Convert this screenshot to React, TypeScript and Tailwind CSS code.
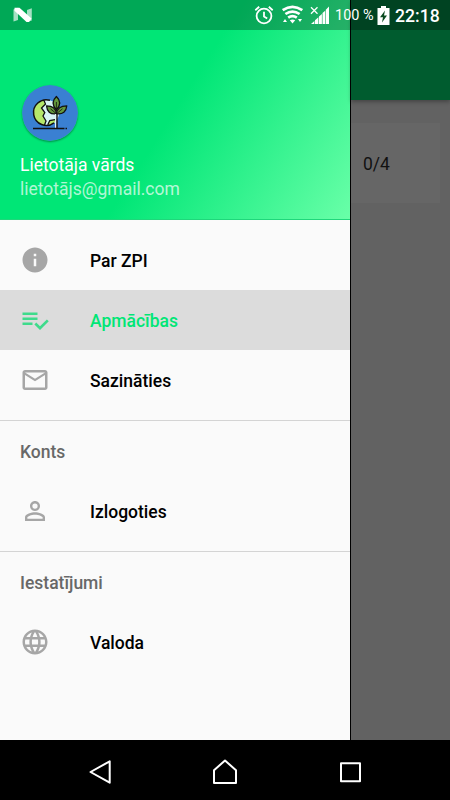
import React from 'react';
import clsx from 'clsx';

interface MenuItem {
  label: string;
  icon: string;
  selected?: boolean;
}

interface MenuSection {
  title?: string;
  items: MenuItem[];
}

const ICONS = {
  info: 'M12 2C6.48 2 2 6.48 2 12s4.48 10 10 10 10-4.48 10-10S17.52 2 12 2zm1 15h-2v-6h2v6zm0-8h-2V7h2v2z',
  playlist: 'M14 10H2v2h12v-2zm0-4H2v2h12V6zM2 16h8v-2H2v2zm19.5-4.5L23 13l-6.99 7-4.51-4.5L13 14l3.01 3 5.49-5.5z',
  mail: 'M20 4H4c-1.1 0-1.99.9-1.99 2L2 18c0 1.1.9 2 2 2h16c1.1 0 2-.9 2-2V6c0-1.1-.9-2-2-2zm0 14H4V8l8 5 8-5v10zm-8-7L4 6h16l-8 5z',
  person: 'M12 5.9a2.1 2.1 0 1 1 0 4.2 2.1 2.1 0 0 1 0-4.2m0 9c2.97 0 6.1 1.46 6.1 2.1v1.1H5.9V17c0-.64 3.13-2.1 6.1-2.1M12 4C9.79 4 8 5.79 8 8s1.79 4 4 4 4-1.79 4-4-1.79-4-4-4zm0 9c-2.67 0-8 1.34-8 4v3h16v-3c0-2.66-5.33-4-8-4z',
  globe: 'M11.99 2C6.47 2 2 6.48 2 12s4.47 10 9.99 10C17.52 22 22 17.52 22 12S17.52 2 11.99 2zm6.93 6h-2.95c-.32-1.25-.78-2.45-1.38-3.56 1.84.63 3.37 1.91 4.33 3.56zM12 4.04c.83 1.2 1.48 2.53 1.91 3.96h-3.82c.43-1.43 1.08-2.76 1.91-3.96zM4.26 14C4.1 13.36 4 12.69 4 12s.1-1.36.26-2h3.38c-.08.66-.14 1.32-.14 2 0 .68.06 1.34.14 2H4.26zm.82 2h2.95c.32 1.25.78 2.45 1.38 3.56-1.84-.63-3.37-1.9-4.33-3.56zm2.95-8H5.08c.96-1.66 2.49-2.93 4.33-3.56C8.81 5.55 8.35 6.75 8.03 8zM12 19.96c-.83-1.2-1.48-2.53-1.91-3.96h3.82c-.43 1.43-1.08 2.76-1.91 3.96zM14.34 14H9.66c-.09-.66-.16-1.32-.16-2 0-.68.07-1.35.16-2h4.68c.09.65.16 1.32.16 2 0 .68-.07 1.34-.16 2zm.25 5.56c.6-1.11 1.06-2.31 1.38-3.56h2.95c-.96 1.65-2.49 2.93-4.33 3.56zM16.36 14c.08-.66.14-1.32.14-2 0-.68-.06-1.34-.14-2h3.38c.16.64.26 1.31.26 2s-.1 1.36-.26 2h-3.38z',
};

const sections: MenuSection[] = [
  {
    items: [
      { label: 'Par ZPI', icon: ICONS.info },
      { label: 'Apmācības', icon: ICONS.playlist, selected: true },
      { label: 'Sazināties', icon: ICONS.mail },
    ],
  },
  { title: 'Konts', items: [{ label: 'Izlogoties', icon: ICONS.person }] },
  { title: 'Iestatījumi', items: [{ label: 'Valoda', icon: ICONS.globe }] },
];

const StatusBar = () => (
  <div className="absolute inset-x-0 top-0 z-10 flex h-[30px] items-center bg-black/27 pr-[10px] pl-[12px] text-white">
    <svg className="h-[16px] w-[22px]" viewBox="0 0 22 16">
      <path d="M1.5 2.5L6 .8V13L1.5 14.5zM15 3L19.8 1.3V13.5L15 15z" fill="#fff" fillOpacity=".65" />
      <path d="M2.5 .8H7.5L19.5 11.5 17 15H14.5L2.5 3.8z" fill="#fff" />
    </svg>
    <svg className="ml-auto h-[20px] w-[20px]" viewBox="0 0 20 20" fill="none" stroke="#fff" strokeWidth="1.8">
      <circle cx="10" cy="11" r="7.4" />
      <path d="M10 6.8V11.4L13.2 13.4M1.3 5.2L5.2 1.8M14.8 1.8L18.7 5.2" />
    </svg>
    <svg className="ml-[7px] h-[20px] w-[23px]" viewBox="0 0 23 20">
      <g fill="none" stroke="#fff" strokeWidth="2.7">
        <path d="M1.7 5.2Q11.5 -1.4 21.3 5.2" />
        <path d="M4.4 9Q11.5 4.1 18.6 9" />
        <path d="M7.2 12.6Q11.5 9.6 15.8 12.6" />
      </g>
      <path d="M8.8 15.2Q11.5 13.8 14.2 15.2L11.5 18.6zM2 17L4 14 6 17zM17 14H21L19 17z" fill="#fff" />
    </svg>
    <svg className="ml-[6px] h-[20px] w-[20px]" viewBox="0 0 20 20">
      <path d="M1 2.2L7.5 8.7M7.5 2.2L1 8.7" stroke="#fff" strokeWidth="1.3" />
      <path d="M1 19L4.4 16V19zM5 15.2L8.4 12.2V19H5zM9 11.4L11.9 9V19H9zM12.5 8L15.2 5.8V19H12.5zM15.8 4.8L19 1.5V19H15.8z" fill="#fff" />
    </svg>
    <span className="ml-[5px] w-[39px] pt-[2px] text-[14.5px] leading-[30px] whitespace-nowrap">100 %</span>
    <svg className="ml-[3px] h-[19px] w-[13px]" viewBox="0 0 13 19">
      <path d="M4 0H9V2H12.5V19H.5V2H4z" fill="#fff" />
      <path d="M8 4.5L3 11.2H6L5 16.5L10 9.5H7z" fill="#0a4a20" />
    </svg>
    <span className="ml-[5px] w-[45px] pt-[2px] text-[17.6px] leading-[30px] font-medium">22:18</span>
  </div>
);

const Avatar = () => (
  <svg className="h-[56px] w-[56px] rounded-full shadow-[0_1px_2px_rgba(0,0,0,0.4)]" viewBox="0 0 56 56">
    <circle cx="28" cy="28" r="28" fill="#3a80d2" />
    <circle cx="24.3" cy="27.6" r="12.8" fill="#d9f5f5" />
    <path d="M22 15.2C14 16.5 11.2 23 11.8 29C12.4 35 17 39.5 23 40.3L23.5 36L21 31L22.8 28L19.5 23.5L23 19z" fill="#b5e86a" />
    <path d="M25.5 40L27.5 35.5L33.5 34.5V37L29 39.6z" fill="#b5e86a" />
    <path d="M22 15.5L23.5 19L19.5 23L22.8 27.5L21 31L24 36L22.5 40M25.8 39.8L27.8 35.5L33 34.6" fill="none" stroke="#111" strokeWidth="1.3" />
    <path d="M28 15.3A12.8 12.8 0 1 0 32 37.8" fill="none" stroke="#111" strokeWidth="1.5" />
    <g fill="#64983c" stroke="#111" strokeWidth="1.3" strokeLinejoin="round">
      <path d="M34.4 11.4C30 15.5 30 20 34.4 25C38.8 20 38.8 15.5 34.4 11.4z" />
      <path d="M24.5 20.8C25 26.5 28 29.6 34.4 28.8C34 23.5 30.5 20.8 24.5 20.8z" />
      <path d="M44.8 20.8C44.3 26.5 41 29.6 34.4 28.8C35 23.5 39 20.8 44.8 20.8z" />
    </g>
    <path d="M34.4 17V28.5M28.5 23.8L34.4 28.8L40.5 23.8" fill="none" stroke="#111" strokeWidth=".8" />
    <path d="M33.8 29V43" stroke="#e6f5f5" strokeWidth="1.6" />
    <path d="M35 29V43M11 43.5H42.5M43.5 43.5H45" fill="none" stroke="#111" strokeWidth="1.4" />
  </svg>
);

const DrawerHeader = () => (
  <header className="h-[220px] border-b border-[#1fd77b] bg-[linear-gradient(122.15deg,#00e676_50%,#69ffa8_100%)] px-[20px] pt-[85px] text-[17.5px] text-white">
    <div className="pl-[2px]">
      <Avatar />
    </div>
    <p className="mt-[12px] leading-[24px]">Lietotāja vārds</p>
    <p className="leading-[24px] text-white/70">lietotājs@gmail.com</p>
  </header>
);

const DrawerItem = ({ label, icon, selected }: MenuItem) => (
  <a
    className={clsx(
      'flex h-[60px] items-center px-[20px] text-[17.5px] font-medium',
      selected ? 'bg-[#dcdcdc] text-[#00e676]' : 'text-black'
    )}
  >
    <svg
      className={clsx('mr-[40px] h-[30px] w-[30px]', selected ? 'fill-[#3fdb8c]' : 'fill-[#a6a6a6]')}
      viewBox="0 0 24 24"
    >
      <path d={icon} />
    </svg>
    <span className="pt-[2px]">{label}</span>
  </a>
);

const Drawer = () => (
  <aside className="w-[350px] bg-[#fafafa]">
    <DrawerHeader />
    <nav className="pt-[10px]">
      {sections.map((section, i) => (
        <section key={i}>
          {section.title && (
            <h2 className="mt-[10px] flex h-[61px] items-center border-t border-[#d4d4d4] px-[20px] pt-[2px] text-[17.5px] font-medium text-[#686868]">
              {section.title}
            </h2>
          )}
          {section.items.map((item) => (
            <DrawerItem key={item.label} {...item} />
          ))}
        </section>
      ))}
    </nav>
  </aside>
);

// Visible part of the page behind the open drawer
const DimmedPage = () => (
  <main className="flex-1 border-l border-black bg-[#626262]">
    <div className="h-[100px] bg-[#005c2f] shadow-[0_2px_4px_rgba(0,0,0,0.3)]" />
    <div className="mt-[23px] mr-[10px] flex h-[80px] items-center bg-[#666666] pt-[2px] pl-[12px] text-[17.5px] text-[#111]">
      0/4
    </div>
  </main>
);

const NavigationBar = () => (
  <footer className="h-[60px] bg-black">
    <svg className="h-[60px] w-[450px]" viewBox="0 0 450 60" fill="none" stroke="#fff" strokeWidth="2" strokeLinejoin="round">
      <path d="M90.5 32L109.7 21.3V42.7z" />
      <path d="M225 20.5L236 30.3V43H214V30.3z" />
      <path d="M341 23.3H360V41.2H341z" />
    </svg>
  </footer>
);

const App = () => (
  <div className="relative flex h-[800px] w-[450px] flex-col overflow-hidden font-['Roboto',sans-serif]">
    <StatusBar />
    <div className="flex h-[740px]">
      <Drawer />
      <DimmedPage />
    </div>
    <NavigationBar />
  </div>
);

export default App;
